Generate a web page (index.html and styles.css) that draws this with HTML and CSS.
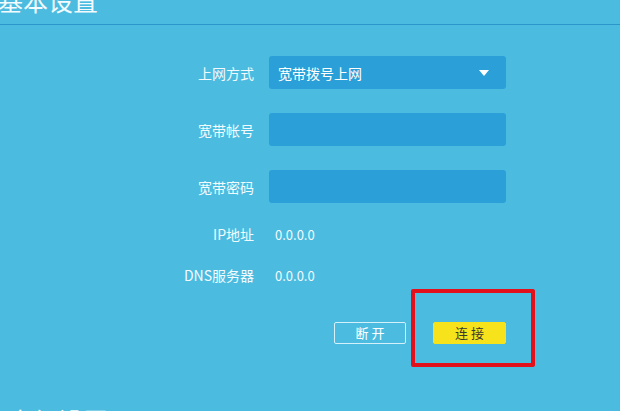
FILE: index.html
```html
<!DOCTYPE html>
<html lang="zh-CN">
<head>
<meta charset="utf-8">
<title>基本设置</title>
<link rel="stylesheet" href="styles.css">
</head>
<body>
<div class="page">
  <header class="section-head">
    <h1 class="section-title">基本设置</h1>
  </header>
  <form class="form-grid">
    <label class="field-label row-input">上网方式</label>
    <div class="select row-input">
      <span>宽带拨号上网</span>
      <span class="caret"></span>
    </div>

    <label class="field-label row-input gap">宽带帐号</label>
    <div class="input row-input gap"></div>

    <label class="field-label row-input gap">宽带密码</label>
    <div class="input row-input gap"></div>

    <span class="field-label row-text gap-s">IP地址</span>
    <span class="field-value row-text gap-s">0.0.0.0</span>

    <span class="field-label row-text gap-s">DNS服务器</span>
    <span class="field-value row-text gap-s">0.0.0.0</span>

    <div class="actions">
      <button type="button" class="btn btn-outline">断 开</button>
      <button type="button" class="btn btn-primary">连 接</button>
    </div>
  </form>
  <div class="next-head">
    <h2 class="section-title">高级设置</h2>
  </div>
  <div class="highlight"></div>
</div>
</body>
</html>
```

FILE: styles.css
```css
* { box-sizing: border-box; }
html, body {
  margin: 0;
  padding: 0;
  width: 620px;
  height: 411px;
  overflow: hidden;
}
body {
  background: #4bbce0;
  color: #ffffff;
  font-family: "Noto Sans CJK SC", "Liberation Sans", sans-serif;
}
.page {
  position: relative;
  width: 620px;
  height: 411px;
  display: flow-root;
}
.section-head {
  display: flow-root;
  height: 25px;
  border-bottom: 1px solid #2a96cb;
}
.section-title {
  margin: -12px 0 0 -2px;
  font-size: 25px;
  line-height: 24px;
  font-weight: 400;
  color: #f4fbfe;
}
.form-grid {
  display: grid;
  grid-template-columns: 104px 237px;
  column-gap: 15px;
  margin: 31px 0 0 150px;
}
.field-label {
  display: flex;
  align-items: center;
  justify-content: flex-end;
  font-size: 14px;
  color: #f2fafd;
}
.row-input { height: 33px; }
.row-text { height: 20px; }
.gap { margin-top: 24px; }
.gap-s { margin-top: 21px; }
.select, .input {
  background: #2b9fd7;
  border-radius: 3px;
}
.select {
  display: flex;
  align-items: center;
  justify-content: space-between;
  padding: 0 17px 0 9px;
  font-size: 14px;
  color: #ffffff;
}
.caret {
  width: 0;
  height: 0;
  border-left: 5px solid transparent;
  border-right: 5px solid transparent;
  border-top: 6px solid #ffffff;
}
.field-value {
  display: flex;
  align-items: center;
  padding-left: 6px;
  font-size: 13px;
  color: #f2fafd;
}
.actions {
  grid-column: 2;
  display: flex;
  justify-content: flex-end;
  gap: 27px;
  margin-top: 37px;
}
.btn {
  width: 73px;
  height: 22px;
  border-radius: 2px;
  font-family: inherit;
  font-size: 13px;
  line-height: 20px;
  padding: 0;
  cursor: pointer;
}
.btn-outline {
  width: 72px;
  background: transparent;
  border: 1px solid #d4f1fb;
  color: #ffffff;
}
.btn-primary {
  background: #f6e31b;
  border: 1px solid #f6e31b;
  color: #3a3a2a;
}
.next-head {
  display: flow-root;
  margin: 76px 0 0 10px;
}
.highlight {
  position: absolute;
  left: 411px;
  top: 289px;
  width: 124px;
  height: 78px;
  border: 4px solid #e2101b;
  border-radius: 2px;
}
```
